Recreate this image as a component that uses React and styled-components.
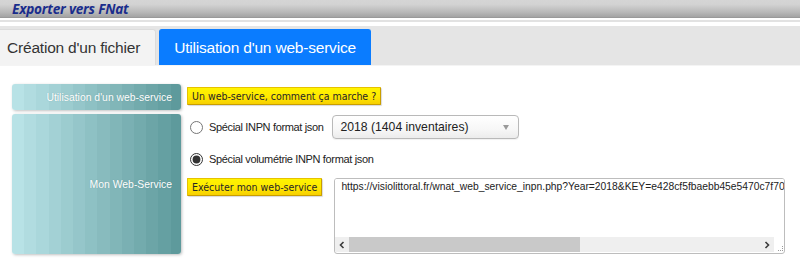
import styled, { createGlobalStyle } from 'styled-components';

const GlobalStyle = createGlobalStyle`
    body {
        margin: 0;
        background: #ffffff;
        font-family: 'Liberation Sans', Arial, sans-serif;
    }
`;

// bandes verticales du cartouche gauche
const bands = (() => {
    const from = [184, 226, 230];
    const to = [94, 154, 156];
    const n = 14;
    const w = 12.2;
    const stops = [];
    for (let i = 0; i < n; i++) {
        const t = i / (n - 1);
        const c = from.map((v, k) => Math.round(v + (to[k] - v) * t));
        stops.push(`rgb(${c.join(',')}) ${(i * w).toFixed(1)}px ${((i + 1) * w).toFixed(1)}px`);
    }
    return `linear-gradient(to right, ${stops.join(', ')})`;
})();

const Page = styled.div`
    width: 800px;
    height: 258px;
    overflow: hidden;
`;

const TitleBar = styled.header`
    height: 18px;
    background: linear-gradient(to bottom, #d5d5d5 0%, #d3d3d3 25%, #b9b9b9 70%, #a3a3a3 100%);
    border-bottom: 1px solid #999999;
    box-sizing: border-box;
    padding-left: 12px;
    display: flex;
    align-items: center;
`;

const Title = styled.h1`
    margin: 0 0 1px 0;
    font-family: 'Open Sans', 'DejaVu Sans', sans-serif;
    font-size: 13.6px;
    font-weight: 700;
    font-style: italic;
    color: #1a2d8c;
    letter-spacing: -0.2px;
`;

const Separator = styled.div`
    height: 8px;
    background: linear-gradient(to bottom, #ffffff 0 2px, #e2e2e2 2px 4px, #ffffff 4px 8px);
`;

const TabBar = styled.nav`
    height: 40px;
    box-sizing: border-box;
    background: #e5e5e5;
    border-bottom: 1px solid #f4f4f4;
    display: flex;
    align-items: flex-end;
    gap: 3px;
`;

const Tab = styled.div`
    height: 36px;
    box-sizing: border-box;
    display: flex;
    align-items: center;
    padding: 0 ${(p) => (p.$active ? '14px' : '15px')};
    font-size: 15.5px;
    letter-spacing: -0.2px;
    border-radius: 3px 3px 0 0;
    color: ${(p) => (p.$active ? '#ffffff' : '#333333')};
    background: ${(p) => (p.$active ? '#0a7cff' : '#f3f3f3')};
    border: 1px solid ${(p) => (p.$active ? '#0a7cff' : '#dcdcdc')};
    border-bottom: none;
    margin-left: ${(p) => (p.$first ? '-9px' : '0')};
`;

const Content = styled.main`
    display: grid;
    grid-template-columns: 169px 1fr;
    column-gap: 6px;
    row-gap: 4px;
    padding: 18px 12px 0 12px;
`;

const Label = styled.div`
    height: ${(p) => p.$height}px;
    box-sizing: border-box;
    background: ${bands};
    border-radius: 3px;
    box-shadow: 1px 1px 3px rgba(0, 0, 0, 0.25);
    color: #ffffff;
    font-size: 10.4px;
    text-shadow: 0 0 1px rgba(60, 110, 110, 0.4);
    display: flex;
    align-items: center;
    justify-content: flex-end;
    padding-right: 9px;
`;

const YellowButton = styled.button`
    font-family: 'DejaVu Sans Condensed', 'DejaVu Sans', sans-serif;
    font-size: 10.5px;
    color: #262626;
    height: 18px;
    padding: 0 4px;
    background: linear-gradient(to bottom, #fff400 0%, #ffe800 55%, #f7cf00 100%);
    border: 1px solid #e6c200;
    border-bottom-color: #c99e00;
    border-right-color: #c99e00;
    border-radius: 1px;
    box-shadow: 1px 1px 1px rgba(0, 0, 0, 0.15);
    cursor: pointer;
    white-space: nowrap;
`;

const HelpCell = styled.div`
    padding-top: 2px;
`;

const Form = styled.div`
    display: flex;
    flex-direction: column;
`;

const OptionRow = styled.label`
    display: flex;
    align-items: center;
    height: ${(p) => p.$height}px;
    font-size: 11px;
    letter-spacing: -0.35px;
    color: #222222;
`;

const Radio = styled.input`
    margin: 0 6px 0 3px;
    width: 13px;
    height: 13px;
    accent-color: #333333;
`;

const SelectWrap = styled.div`
    position: relative;
    margin-left: 9px;
`;

const Select = styled.select`
    appearance: none;
    width: 187px;
    height: 24px;
    padding: 0 0 0 7px;
    font-family: 'Liberation Sans', Arial, sans-serif;
    font-size: 12.2px;
    color: #222222;
    border: 1px solid #b9b9b9;
    border-radius: 4px;
    background: linear-gradient(to bottom, #ffffff 0%, #f7f7f7 60%, #ececec 100%);
    box-shadow: 0 1px 1px rgba(0, 0, 0, 0.06);
`;

const Arrow = styled.span`
    position: absolute;
    right: 10px;
    top: 10px;
    width: 0;
    height: 0;
    border-left: 3px solid transparent;
    border-right: 3px solid transparent;
    border-top: 5px solid #9a9a9a;
    pointer-events: none;
`;

const RunRow = styled.div`
    display: flex;
    align-items: flex-start;
    gap: 12px;
`;

const Field = styled.div`
    width: 451px;
    height: 76px;
    box-sizing: border-box;
    border: 1px solid #bdbdbd;
    border-radius: 3px;
    display: flex;
    flex-direction: column;
    background: #ffffff;
    overflow: hidden;
`;

const UrlText = styled.textarea`
    flex: 1;
    margin: 0;
    border: none;
    outline: none;
    padding: 2px 6px;
    font-family: 'Liberation Sans', Arial, sans-serif;
    font-size: 10.3px;
    color: #222222;
    white-space: pre;
    overflow: hidden;
    resize: none;
`;

const ScrollBar = styled.div`
    height: 15px;
    margin-bottom: 1px;
    display: flex;
    align-items: stretch;
`;

const ScrollArrow = styled.div`
    width: 14px;
    background: #efefef;
    display: flex;
    align-items: center;
    justify-content: center;
`;

const Track = styled.div`
    flex: 1;
    background: #efefef;
    display: flex;
`;

const Thumb = styled.div`
    width: ${(p) => p.$ratio * 100}%;
    background: #c9c9c9;
`;

const Grip = styled.div`
    width: 10px;
    display: flex;
    align-items: flex-end;
    justify-content: flex-end;
`;

const Chevron = ({ dir }) => (
    <svg width="6" height="8" viewBox="0 0 6 8">
        <path
            d={dir === 'left' ? 'M4.5 1 L1.5 4 L4.5 7' : 'M1.5 1 L4.5 4 L1.5 7'}
            fill="none"
            stroke="#3c3c3c"
            strokeWidth="1.6"
        />
    </svg>
);

const GripDots = () => (
    <svg width="7" height="7" viewBox="0 0 7 7">
        <g fill="#9a9a9a">
            <rect x="5" y="5" width="1" height="1" />
            <rect x="3" y="5" width="1" height="1" />
            <rect x="5" y="3" width="1" height="1" />
            <rect x="1" y="5" width="1" height="1" />
            <rect x="5" y="1" width="1" height="1" />
        </g>
    </svg>
);

const url = 'https://visiolittoral.fr/wnat_web_service_inpn.php?Year=2018&KEY=e428cf5fbaebb45e5470c7f70a3d91c2&FORMAT=json&TYPE=inpn&LANG=fr&VOLUMETRIE=1&MODE=full';

export default function App() {
    return (
        <Page>
            <GlobalStyle />
            <TitleBar>
                <Title>Exporter vers FNat</Title>
            </TitleBar>
            <Separator />
            <TabBar>
                <Tab $first>Création d'un fichier</Tab>
                <Tab $active>Utilisation d'un web-service</Tab>
            </TabBar>
            <Content>
                <Label $height={26}>Utilisation d'un web-service</Label>
                <HelpCell>
                    <YellowButton>Un web-service, comment ça marche ?</YellowButton>
                </HelpCell>
                <Label $height={140}>Mon Web-Service</Label>
                <Form>
                    <OptionRow $height={26}>
                        <Radio type="radio" name="ws" />
                        Spécial INPN format json
                        <SelectWrap>
                            <Select defaultValue="2018">
                                <option value="2018">2018 (1404 inventaires)</option>
                            </Select>
                            <Arrow />
                        </SelectWrap>
                    </OptionRow>
                    <OptionRow $height={38}>
                        <Radio type="radio" name="ws" defaultChecked />
                        Spécial volumétrie INPN format json
                    </OptionRow>
                    <RunRow>
                        <YellowButton>Exécuter mon web-service</YellowButton>
                        <Field>
                            <UrlText readOnly wrap="off" defaultValue={url} />
                            <ScrollBar>
                                <ScrollArrow><Chevron dir="left" /></ScrollArrow>
                                <Track>
                                    <Thumb $ratio={0.56} />
                                </Track>
                                <ScrollArrow><Chevron dir="right" /></ScrollArrow>
                                <Grip><GripDots /></Grip>
                            </ScrollBar>
                        </Field>
                    </RunRow>
                </Form>
            </Content>
        </Page>
    );
}
